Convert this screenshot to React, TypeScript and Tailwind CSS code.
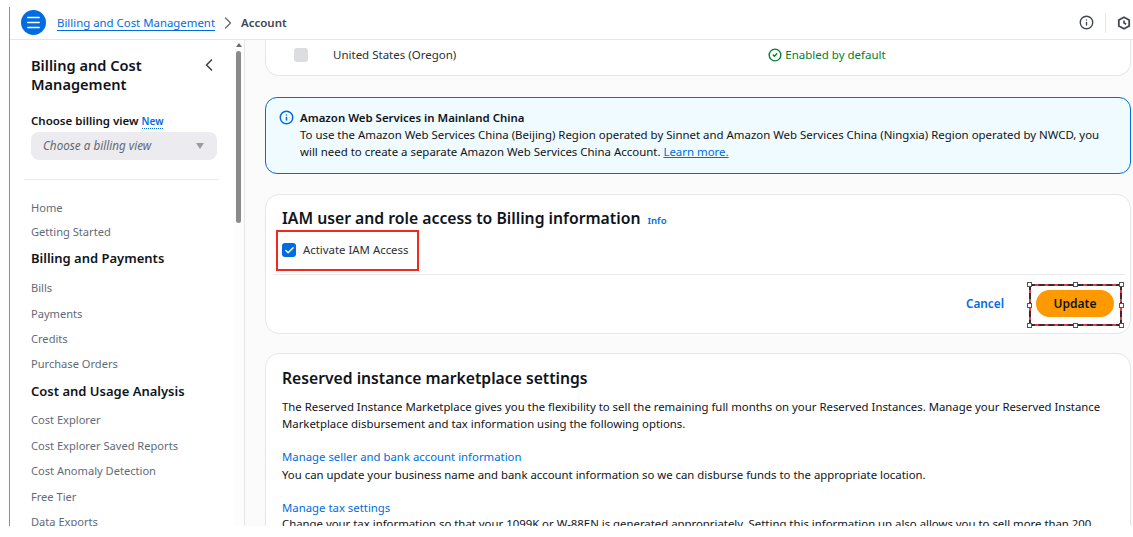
import { Check, ChevronLeft, ChevronRight, CircleCheck, Info, Menu } from 'lucide-react';

const font = { fontFamily: '"Noto Sans", sans-serif' };

const HANDLES = [
  [763, 89],
  [809, 89],
  [855, 89],
  [763, 110],
  [855, 110],
  [763, 130],
  [809, 130],
  [855, 130],
];

function NavItem({ label, className }: { label: string; className: string }) {
  return <div className={`text-[11.1px] leading-[16px] text-[#5f6b7a] ${className}`}>{label}</div>;
}

function NavHeading({ label, className }: { label: string; className: string }) {
  return <div className={`text-[13px] leading-[18px] font-semibold text-[#0f141a] ${className}`}>{label}</div>;
}

function Sidebar() {
  return (
    <aside className="w-[235px] shrink-0 flex border-r border-[#e4e6e8] bg-white overflow-hidden">
      <div className="w-[223px] shrink-0 pt-[16px] pl-[21px] pr-[6px]">
        <div className="flex justify-between pr-[8px]">
          <div className="text-[14.6px] leading-[19px] font-semibold text-[#0f141a]">
            Billing and Cost
            <br />
            Management
          </div>
          <ChevronLeft size={20} strokeWidth={2} className="text-[#424650] -mt-[1px]" />
        </div>
        <div className="mt-[19px] text-[11.5px] leading-[16px] font-semibold text-[#0f141a]">
          Choose billing view{' '}
          <span className="text-[10px] text-[#006ce0] border-b border-dotted border-[#006ce0]">New</span>
        </div>
        <div className="mt-[3px] h-[28px] w-[186px] rounded-[8px] bg-[#ebebf0] flex items-center justify-between pl-[12px] pr-[13px]">
          <span className="text-[11.7px] italic text-[#656871]">Choose a billing view</span>
          <span className="w-0 h-0 border-x-[4.5px] border-x-transparent border-t-[6px] border-t-[#9a9aa2]" />
        </div>
        <div className="mt-[19px] -ml-[7px] w-[195px] h-px bg-[#e9ebed]" />
        <NavItem label="Home" className="mt-[20px]" />
        <NavItem label="Getting Started" className="mt-[8px]" />
        <NavHeading label="Billing and Payments" className="mt-[9px]" />
        <NavItem label="Bills" className="mt-[13px]" />
        <NavItem label="Payments" className="mt-[10px]" />
        <NavItem label="Credits" className="mt-[9px]" />
        <NavItem label="Purchase Orders" className="mt-[9px]" />
        <NavHeading label="Cost and Usage Analysis" className="mt-[10px]" />
        <NavItem label="Cost Explorer" className="mt-[12px]" />
        <NavItem label="Cost Explorer Saved Reports" className="mt-[10px]" />
        <NavItem label="Cost Anomaly Detection" className="mt-[9px]" />
        <NavItem label="Free Tier" className="mt-[10px]" />
        <NavItem label="Data Exports" className="mt-[9px]" />
      </div>
      <div className="w-[11px] shrink-0 flex flex-col items-center pt-[3px] bg-[#fdfdfd]">
        <span className="w-0 h-0 border-x-[3px] border-x-transparent border-b-[4px] border-b-[#6b6b6b]" />
        <div className="mt-[4px] w-[5px] h-[172px] rounded-full bg-[#8a8a8a]" />
      </div>
    </aside>
  );
}

function Card({ children, className }: { children: React.ReactNode; className: string }) {
  return <section className={`bg-white border border-[#e4e6e8] rounded-[14px] ${className}`}>{children}</section>;
}

export default function App() {
  return (
    <div className="w-[1133px] h-[537px] bg-white overflow-hidden pt-[7px]" style={font}>
      <div className="ml-[9px] h-[519px] border-l border-[#8f8f8f] flex flex-col">
        <header className="h-[33px] shrink-0 flex items-center border-b border-[#e4e6e8] pl-[11px] pb-px">
          <div className="w-[25px] h-[25px] rounded-full bg-[#006ce0] flex items-center justify-center">
            <Menu size={17} strokeWidth={2.2} className="text-white" />
          </div>
          <a className="ml-[11px] text-[11.4px] leading-[15px] text-[#006ce0] border-b border-[#006ce0]">
            Billing and Cost Management
          </a>
          <ChevronRight size={20} strokeWidth={1.5} className="ml-[3px] text-[#656871]" />
          <span className="ml-[3px] text-[11.5px] font-semibold text-[#424650]">Account</span>
          <div className="ml-auto flex items-center overflow-hidden w-[54px]">
            <Info size={15} strokeWidth={2.2} className="text-[#424650] shrink-0" />
            <div className="ml-[11px] w-px h-[20px] bg-[#e4e6e8] shrink-0" />
            <svg width="14" height="14" viewBox="0 0 14 14" fill="none" className="ml-[11px] shrink-0 text-[#424650]">
              <path d="M7 1.2 12.2 4v6L7 12.8 1.8 10V4z" stroke="currentColor" strokeWidth="1.8" />
              <path d="M7 4.6V7l2.2 1.3" stroke="currentColor" strokeWidth="1.6" />
            </svg>
          </div>
        </header>
        <div className="flex flex-1 min-h-0 overflow-hidden">
          <Sidebar />
          <main className="flex-1 min-w-0 bg-[#fbfbfb] pl-[20px] pr-[2px] overflow-hidden">
            <Card className="h-[36px] border-t-0 rounded-t-none flex items-center pb-[5px] text-[11.5px] text-[#0f141a]">
              <span className="ml-[28px] w-[14px] h-[14px] rounded-[3px] bg-[#dcdde1]" />
              <span className="ml-[25px] text-[#29303a]">United States (Oregon)</span>
              <span className="ml-[312px] flex items-center gap-[3px] text-[#00802f]">
                <CircleCheck size={14} strokeWidth={2.4} />
                Enabled by default
              </span>
            </Card>
            <div className="mt-[21px] h-[77px] rounded-[12px] border-[1.5px] border-[#006ce0] bg-[#f0fbff] pl-[13px] pt-[11px] flex">
              <Info size={15} strokeWidth={2.4} className="text-[#006ce0] shrink-0 mt-[1px]" />
              <div className="ml-[6px] text-[11.43px] leading-[17px] text-[#0f141a]">
                <div className="font-semibold">Amazon Web Services in Mainland China</div>
                <div>
                  To use the Amazon Web Services China (Beijing) Region operated by Sinnet and Amazon Web Services China (Ningxia) Region operated by NWCD, you
                  <br />
                  will need to create a separate Amazon Web Services China Account.{' '}
                  <span className="text-[#006ce0] underline">Learn more.</span>
                </div>
              </div>
            </div>
            <Card className="mt-[20px] h-[140px] relative">
              <div className="pl-[16px] pt-[11px] flex items-baseline">
                <h2 className="text-[15.75px] leading-[24px] font-semibold text-[#0f141a]">IAM user and role access to Billing information</h2>
                <span className="ml-[7px] text-[9.6px] font-semibold text-[#006ce0]">Info</span>
              </div>
              <div className="pl-[16px] mt-[12px] flex items-center h-[16px]">
                <span className="w-[14px] h-[14px] rounded-[3px] bg-[#006ce0] flex items-center justify-center">
                  <Check size={11} strokeWidth={3} className="text-white" />
                </span>
                <span className="ml-[7px] text-[11.4px] text-[#29303a]">Activate IAM Access</span>
              </div>
              <div className="absolute left-[10px] top-[35px] w-[143px] h-[41px] border-[2px] border-[#ef2b1d]" />
              <div className="absolute left-[8px] right-[5px] top-[79px] h-px bg-[#e9ebed]" />
              <div className="absolute right-[16px] top-[95px] flex items-center">
                <span className="text-[11.8px] font-semibold text-[#006ce0] mr-[32px]">Cancel</span>
                <span className="w-[78px] h-[27px] rounded-full bg-[#ff9900] text-[12px] font-semibold text-[#0f141a] flex items-center justify-center">
                  Update
                </span>
              </div>
              <div className="absolute left-[763px] top-[89px] w-[93px] h-[42px] border-[2px] border-[#ea3a42]">
                <div className="-m-[2px] h-[42px] border-[2px] border-dashed border-[#3a2a2a]" />
              </div>
              {HANDLES.map(([x, y]) => (
                <span
                  key={`${x}-${y}`}
                  className="absolute w-[5px] h-[5px] bg-white border border-[#555]"
                  style={{ left: x - 2, top: y - 2 }}
                />
              ))}
            </Card>
            <Card className="mt-[19px] h-[200px] pl-[16px] pt-[12px] text-[11.36px] leading-[17px] text-[#0f141a]">
              <h2 className="text-[15.7px] leading-[24px] font-semibold">Reserved instance marketplace settings</h2>
              <p className="mt-[8px]">
                The Reserved Instance Marketplace gives you the flexibility to sell the remaining full months on your Reserved Instances. Manage your Reserved Instance
                <br />
                Marketplace disbursement and tax information using the following options.
              </p>
              <div className="mt-[16px]">
                <div className="text-[#006ce0]">Manage seller and bank account information</div>
                <div className="mt-px">
                  You can update your business name and bank account information so we can disburse funds to the appropriate location.
                </div>
              </div>
              <div className="mt-[16px]">
                <div className="text-[#006ce0]">Manage tax settings</div>
                <div className="mt-[-1px]">
                  Change your tax information so that your 1099K or W-88EN is generated appropriately. Setting this information up also allows you to sell more than 200
                </div>
              </div>
            </Card>
          </main>
        </div>
      </div>
    </div>
  );
}
